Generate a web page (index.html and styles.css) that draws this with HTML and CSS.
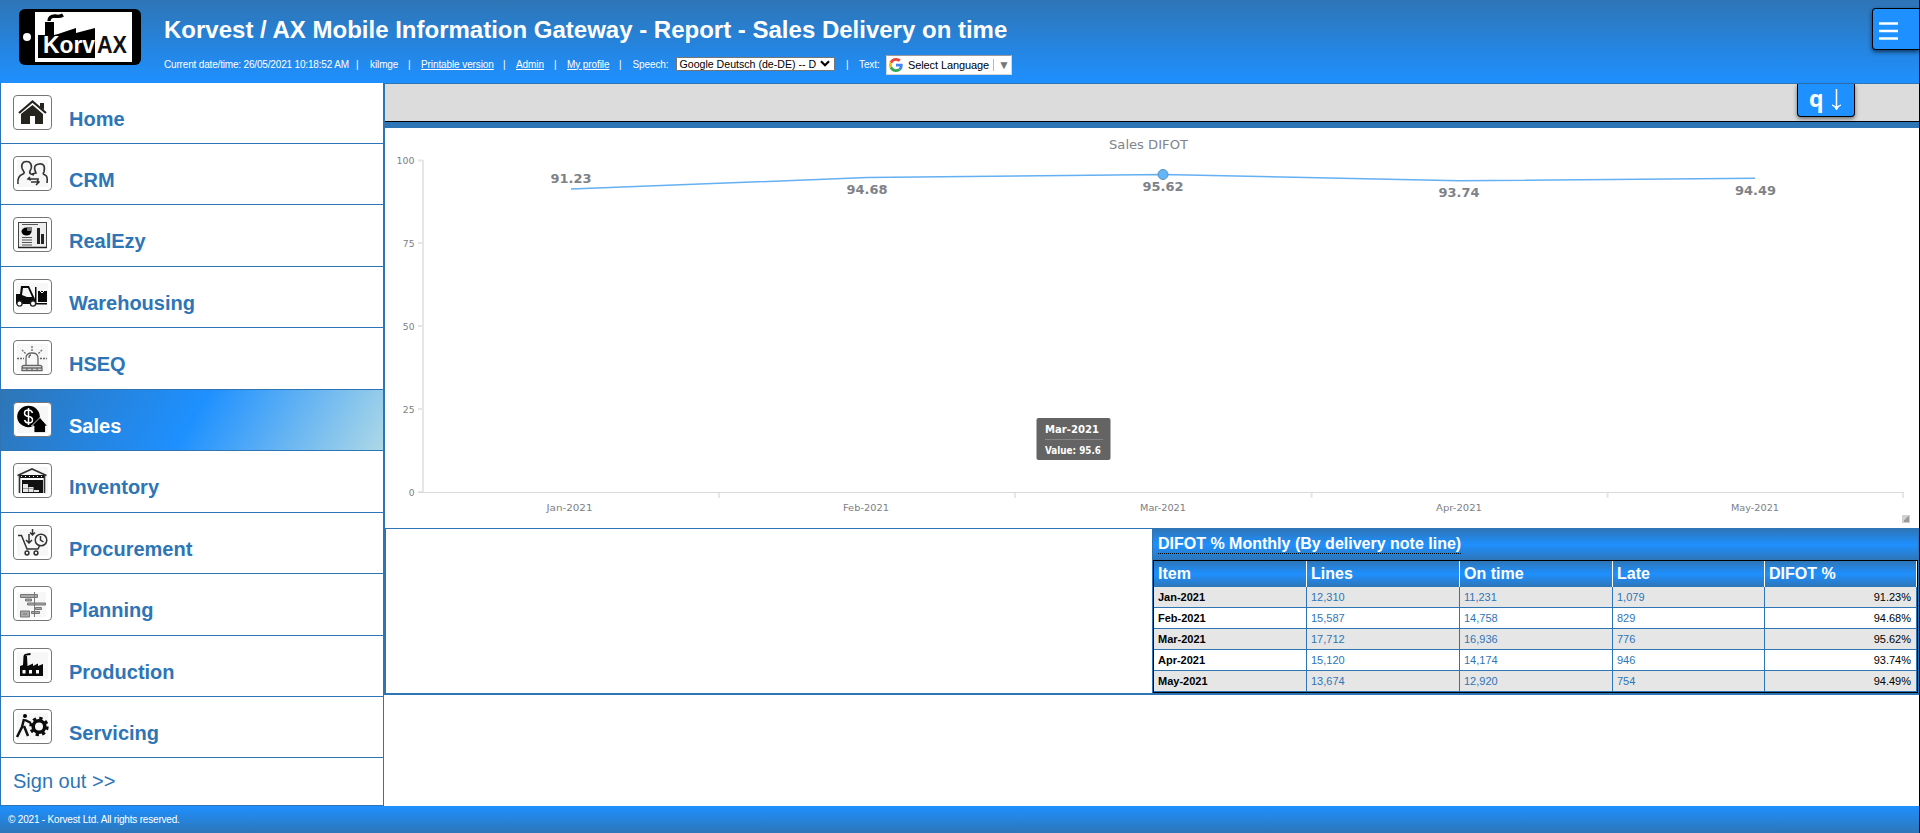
FILE: index.html
```html
<!DOCTYPE html>
<html lang="en">
<head>
<meta charset="utf-8">
<title>Korvest / AX Mobile Information Gateway</title>
<link rel="stylesheet" href="styles.css">
</head>
<body>
<div class="page">
<header class="header">
  <svg class="logo" width="122" height="56" viewBox="0 0 122 56">
    <rect width="122" height="56" rx="6" fill="#000"/>
    <rect x="16" y="3" width="97" height="50" fill="#fff"/>
    <ellipse cx="8" cy="28" rx="4" ry="4" fill="#fff"/>
    <path d="M19 49V26h7V13h9v13l4-1 18-6v5l19-5v30z" fill="#000"/>
    <path d="M30 12q0-5 6-5 5 1 8-1" fill="none" stroke="#000" stroke-width="3.400"/>
    <text class="logo-korv" x="24" y="44" textLength="52" lengthAdjust="spacingAndGlyphs">Korv</text>
    <text class="logo-ax" x="78" y="44" textLength="30" lengthAdjust="spacingAndGlyphs">AX</text>
  </svg>
  <div class="heading">
    <h1>Korvest / AX Mobile Information Gateway - Report - Sales Delivery on time</h1>
    <div class="meta">
      <span class="stamp">Current date/time: 26/05/2021 10:18:52 AM</span><i>|</i>
      <span>kilmge</span><i>|</i>
      <a>Printable version</a><i>|</i>
      <a>Admin</a><i>|</i>
      <a>My profile</a><i>|</i>
      <span>Speech:</span>
      <span class="select"><b>Google Deutsch (de-DE) -- D</b><svg width="10" height="7" viewBox="0 0 10 7"><path d="M1 1.200 5 5.200 9 1.200" fill="none" stroke="#000" stroke-width="2.200"/></svg></span><i>|</i>
      <span>Text:</span>
      <span class="language"><svg width="14" height="14" viewBox="0 0 48 48"><path fill="#EA4335" d="M24 9.500c3.540 0 6.710 1.220 9.210 3.600l6.850-6.850C35.900 2.380 30.470 0 24 0 14.620 0 6.510 5.380 2.560 13.220l7.980 6.190C12.430 13.720 17.740 9.500 24 9.500z"/><path fill="#4285F4" d="M46.980 24.550c0-1.570-.15-3.090-.38-4.550H24v9.020h12.940c-.58 2.960-2.260 5.480-4.780 7.180l7.730 6c4.510-4.180 7.090-10.360 7.090-17.650z"/><path fill="#FBBC05" d="M10.530 28.590A14.500 14.500 0 0 1 9.770 24c0-1.600.27-3.140.76-4.590l-7.980-6.190A24 24 0 0 0 0 24c0 3.880.92 7.540 2.560 10.780z"/><path fill="#34A853" d="M24 48c6.480 0 11.930-2.130 15.890-5.810l-7.730-6c-2.150 1.450-4.920 2.300-8.160 2.300-6.260 0-11.570-4.220-13.470-9.910l-7.980 6.190C6.510 42.620 14.620 48 24 48z"/></svg><b>Select Language</b><em>▼</em></span>
    </div>
  </div>
  <div class="burger"><svg width="19" height="18" viewBox="0 0 19 18"><path d="M0 1.500h19M0 9h19M0 16.500h19" stroke="#fff" stroke-width="2.400"/></svg></div>
</header>
<div class="body">
<nav class="nav">
  <a class="item"><svg class="icon" viewBox="1 1 37 33"><path fill="none" stroke="#26241f" stroke-width="2.200" d="M6 18 19.500 6.500 33 18"/><path fill="#26241f" d="M27 8h4v7l-4-3zM8 19 19.500 10 30 19v10h-8v-8h-5v8H8z"/></svg><span>Home</span></a>
  <a class="item"><svg class="icon" viewBox="1 1 37 33"><rect class="tint" x="4" y="4" width="31" height="27"/><g fill="none" stroke="#333" stroke-width="1.600"><path d="M5 28q-1-8 5-10q2-1 .5-3C7 10 9 5.500 13.500 5.500S20 10 17 15q-1 2 1 3l3 1M19 18l4-1q-4-8 3-9t5 8q-2 2 1 3t2 8M15 23h11M18 26h8M17 21l-2 2 3 1M24 24l2 2-3 3"/></g></svg><span>CRM</span></a>
  <a class="item"><svg class="icon" viewBox="1 1 37 33"><rect x="5.500" y="5.500" width="28" height="25" fill="#eee" stroke="#444"/><path d="M9 7.500h16M9 20.500h10M9 23h10M9 25.500h10M9 28h10" stroke="#555"/><path d="M24 11h3v16h-3zM28 17h3v10h-3z" fill="#222"/><ellipse cx="13.500" cy="14.500" rx="5" ry="4"/><path d="M14 14v-4h5v4z" fill="#777"/><path d="M5 30.500h29" stroke="#222" stroke-width="1.500"/></svg><span>RealEzy</span></a>
  <a class="item"><svg class="icon" viewBox="1 1 37 33"><rect class="tint" x="3" y="4" width="32" height="27"/><path fill="#0a0a0a" fill-rule="evenodd" d="M3 15h4l1-8h8l6 13v5H3zM10 9l-1 7 5 2h5l-4-9zM25 12h9v11h-9zM22 8h1.500v16H34v1.500H22z"/><path d="m27 12 2 2 2-2" stroke="#fff"/><g fill="#fff" stroke="#222" stroke-width="1.300"><circle cx="6.500" cy="24.500" r="2.600"/><circle cx="20" cy="24.500" r="2.600"/></g></svg><span>Warehousing</span></a>
  <a class="item"><svg class="icon" viewBox="1 1 37 33"><rect class="tint" x="4" y="4" width="31" height="27"/><g fill="none" stroke="#666" stroke-width="1.300"><path d="M13 25v-7q0-5 6-5t6 5v7M16 18q0-3 2-3M9 30.500v-3q0-2 2-2h16q2 0 2 2v3zM9 28h20M14 28v2M19 28v2M24 28v2"/><path stroke-dasharray="2 1" d="M4 18.500h7M27 18.500h7M9 10l4 4M29 10l-4 4M19 6v6"/></g></svg><span>HSEQ</span></a>
  <a class="item active"><svg class="icon" viewBox="1 1 37 33"><rect class="tint" x="4" y="4" width="31" height="27"/><ellipse cx="15.500" cy="14.500" rx="11.300" ry="10.700"/><path d="m18.500 24 8.500-8.500 7.500 8.500h-2v6.500H21V24z" stroke="#fff" stroke-width=".8"/><path d="M19.500 11q-1-3-4-3-4 0-4 3t4 3.500 4 3.500-4 3q-3 0-4-3M15.500 6v17" fill="none" stroke="#fff" stroke-width="1.500"/></svg><span>Sales</span></a>
  <a class="item"><svg class="icon" viewBox="1 1 37 33"><rect class="tint" x="4" y="4" width="31" height="27"/><path d="M4.500 12.500 19 6l14.500 6.500M6.500 12v18M31.500 12v18" fill="none" stroke="#333" stroke-width="1.600"/><path d="M7 12h24v3H7zM9 17h21v13H9z" fill="#111"/><path d="M8 13.500h23" stroke="#fff" stroke-dasharray="1 3"/><path d="M10 21h5v8h-5zM15.500 24h5v5h-5zM21 27h5v2h-5z" fill="#e6e6e6"/><path d="M10 25.500h10" stroke="#666" stroke-width=".6"/></svg><span>Inventory</span></a>
  <a class="item"><svg class="icon" viewBox="1 1 37 33"><rect class="tint" x="4" y="4" width="31" height="27"/><g fill="none" stroke="#333" stroke-width="1.500"><path d="M5 10.500h3.500L14 24h11l1.500-3M16 9v9M13 15l3 3 3-3M19.500 4v6M17 7.500l2.500 2.500L22 7.500"/><circle cx="28" cy="15" r="5.800"/><path d="M27.500 11v4l3 2"/><circle cx="14" cy="28" r="1.900"/><circle cx="23" cy="28" r="1.900"/></g></svg><span>Procurement</span></a>
  <a class="item"><svg class="icon" viewBox="1 1 37 33"><rect class="tint" x="4" y="6" width="29" height="25"/><g fill="#aaa" stroke="#777"><path d="M7.500 8.500h17v3h-17zM12.500 13h6v2h-6zM14.500 17h18v2h-18zM22.500 21.500h6v2h-6zM18.500 25.500h8v2h-8zM7.500 25h9v6h-9z"/><path d="M21.500 6v25M10 28h4"/></g></svg><span>Planning</span></a>
  <a class="item"><svg class="icon" viewBox="1 1 37 33"><rect class="tint" x="4" y="4" width="31" height="27"/><path d="M7 28V18l3-1 .5-9h3.500l.5 10 5.500-2.500V18l5-2.500V18l5-2v12z" fill="#0a0a0a"/><path d="M11.500 8q0-1.500 6-2" fill="none" stroke="#000" stroke-width="1.800"/><path d="M9.500 22h3v3.500h-3zM16 22h3v3.500h-3zM23 22h3v3.500h-3z" fill="#fff"/></svg><span>Production</span></a>
  <a class="item"><svg class="icon" viewBox="1 1 37 33"><rect class="tint" x="4" y="4" width="31" height="27"/><circle cx="12" cy="7" r="2"/><path d="M11 10 9 18l-5 10M11 17l4 10M12 11l6 3" fill="none" stroke="#111" stroke-width="2.500"/><circle cx="26" cy="17.500" r="5.800" fill="none" stroke="#0a0a0a" stroke-width="3.600"/><circle cx="26" cy="17.500" r="8.300" fill="none" stroke="#0a0a0a" stroke-width="2.800" stroke-dasharray="3.300 3.220"/></svg><span>Servicing</span></a>
  <a class="signout">Sign out &gt;&gt;</a>
</nav>
<main class="main">
  <div class="toolbar"><div class="quick"><b>q</b><svg width="11" height="22" viewBox="0 0 11 22"><path d="M5.500 0v18" stroke="#fff" stroke-width="1.500"/><path d="M1 16q3 1 4.500 5Q7 17 10 16l-4.500 2z" fill="#fff" stroke="#fff"/></svg></div></div>
  <svg class="chart" width="1534" height="400" viewBox="385 128 1534 400">
    <path d="M423 160v332M418 160.500h5M418 243h5M418 326h5M418 409h5M418 492h5M719 492v6M1015 492v6M1311.500 492v6M1607.500 492v6M1903 492v6" stroke="#e6e6e6" stroke-width="2"/>
    <path d="M418 492.500h1485.500" stroke="#d9d9d9"/>
    <polyline points="571,189 867,177.600 1163,174.500 1459,180.700 1755,178.300" fill="none" stroke="#64b0f2" stroke-width="1.500"/>
    <circle cx="1163" cy="174.500" r="5" fill="#64b5f6" stroke="#5590c4"/>
    <g class="axis" text-anchor="end"><text x="414.500" y="164" textLength="18" lengthAdjust="spacingAndGlyphs">100</text><text x="414.500" y="247">75</text><text x="414.500" y="330">50</text><text x="414.500" y="413">25</text><text x="414.500" y="496">0</text></g>
    <g class="axis"><text x="546.500" y="511" textLength="46" lengthAdjust="spacingAndGlyphs">Jan-2021</text><text x="843" y="511" textLength="46" lengthAdjust="spacingAndGlyphs">Feb-2021</text><text x="1140" y="511" textLength="46" lengthAdjust="spacingAndGlyphs">Mar-2021</text><text x="1436" y="511" textLength="46" lengthAdjust="spacingAndGlyphs">Apr-2021</text><text x="1731" y="511" textLength="48" lengthAdjust="spacingAndGlyphs">May-2021</text></g>
    <text class="chart-title" x="1109" y="149" textLength="79" lengthAdjust="spacingAndGlyphs">Sales DIFOT</text>
    <g class="value"><text x="550.500" y="183" textLength="41" lengthAdjust="spacingAndGlyphs">91.23</text><text x="846.500" y="194" textLength="41" lengthAdjust="spacingAndGlyphs">94.68</text><text x="1142.500" y="191" textLength="41" lengthAdjust="spacingAndGlyphs">95.62</text><text x="1438.500" y="197" textLength="41" lengthAdjust="spacingAndGlyphs">93.74</text><text x="1735" y="195" textLength="41" lengthAdjust="spacingAndGlyphs">94.49</text></g>
    <rect x="1036.500" y="418" width="74" height="42" rx="2" fill="#646464"/>
    <path d="M1045 439.500h58" stroke="#858585"/>
    <g class="tip"><text x="1045" y="433" textLength="54" lengthAdjust="spacingAndGlyphs">Mar-2021</text><text x="1045" y="454" textLength="56" lengthAdjust="spacingAndGlyphs">Value: 95.6</text></g>
    <path d="M1902 515h8v8h-8z" fill="#d0d0d0"/><path d="M1904 522v-2l2-1v-1l3-2v6z" fill="#9a9a9a"/>
  </svg>
  <section class="detail">
    <div class="blank"></div>
    <div class="report">
      <div class="report-title"><span>DIFOT % Monthly (By delivery note line)</span></div>
      <table>
        <colgroup><col class="wide"><col class="wide"><col class="wide"><col><col></colgroup>
        <thead><tr><th>Item</th><th>Lines</th><th>On time</th><th>Late</th><th>DIFOT %</th></tr></thead>
        <tbody>
          <tr><th>Jan-2021</th><td>12,310</td><td>11,231</td><td>1,079</td><td>91.23%</td></tr>
          <tr><th>Feb-2021</th><td>15,587</td><td>14,758</td><td>829</td><td>94.68%</td></tr>
          <tr><th>Mar-2021</th><td>17,712</td><td>16,936</td><td>776</td><td>95.62%</td></tr>
          <tr><th>Apr-2021</th><td>15,120</td><td>14,174</td><td>946</td><td>93.74%</td></tr>
          <tr><th>May-2021</th><td>13,674</td><td>12,920</td><td>754</td><td>94.49%</td></tr>
        </tbody>
      </table>
    </div>
  </section>
</main>
</div>
<footer class="footer">© 2021 - Korvest Ltd. All rights reserved.</footer>
</div>
</body>
</html>
```
FILE: styles.css
```css
* { box-sizing: border-box; }
body { margin: 0; background: #fff; font-family: "Liberation Sans", Arial, sans-serif; overflow: hidden; }
.page { width: 1920px; height: 833px; display: flex; flex-direction: column; border-right: 1px solid #000; }

.header { height: 83px; flex: none; display: flex; align-items: flex-start; background: linear-gradient(#2e75b6, #1e90ff); color: #fff; }
.logo { margin: 9px 0 0 19px; flex: none; }
.logo-korv, .logo-ax { font-size: 24px; font-weight: bold; fill: #fff; }
.logo-ax { fill: #111; }
.heading { margin-left: 23px; flex: 1; }
h1 { margin: 16px 0 0; font-size: 24px; line-height: 28px; white-space: nowrap; }
.meta { display: grid; grid-template-columns: 192px 14px 38px 13px 82px 13px 38px 13px 52px 13.5px 43px 170.500px 13px 27px 126px; align-items: center; height: 20px; margin-top: 10px; font-size: 10px; white-space: nowrap; line-height: 12px; letter-spacing: -.1px; }
.meta i { font-style: normal; }
.meta a { text-decoration: underline; }
.stamp { letter-spacing: -.17px; }
.select { width: 159px; height: 14px; margin-top: -2px; display: flex; align-items: center; justify-content: space-between; background: #fff; border: 1px solid #767676; border-radius: 1px; padding: 0 4px 0 3px; color: #000; letter-spacing: 0; }
.select b, .language b { font-weight: normal; }
.select b { font-size: 10.600px; }
.language { height: 20px; margin-top: 1px; display: flex; align-items: center; background: #fff; border: 1px solid #d5d5d5; border-top-color: #9b9b9b; padding-left: 2px; color: #000; font-size: 11px; letter-spacing: -.1px; }
.language svg { flex: none; }
.language b { margin-left: 5px; width: 82px; }
.language em { margin-left: 3px; border-left: 1px solid #bbb; padding-left: 4px; font-style: normal; color: #767676; font-size: 12px; }
.burger { width: 47px; height: 42px; margin-top: 8px; border: 1px solid #000; border-right: 0; border-radius: 4px 0 0 4px; background: #1e90ff; padding: 13px 0 0 6px; box-shadow: 0 2px 4px rgba(0,0,0,.6); flex: none; }
.burger svg { display: block; }

.body { height: 723px; flex: none; display: flex; align-items: flex-start; }
.nav { width: 384px; height: 723px; flex: none; border: 1px solid #2e75b6; border-top: 0; color: #2e75b6; font-size: 20px; }
.item { display: flex; height: 61px; border-bottom: 1px solid #2e75b6; padding: 12px 0 0 12px; font-weight: bold; line-height: 24px; }
.item:nth-child(3), .item:nth-child(5), .item:nth-child(7), .item:nth-child(9) { height: 62px; }
.item span { margin: 12px 0 0 17px; }
.icon { width: 39px; height: 35px; flex: none; background: #fff; border: 1px solid #777; border-radius: 4px; }
.tint { fill: #f7f7f7; }
.active { color: #fff; background: linear-gradient(120deg, #2e75b6, #1e90ff 50%, #add8e6); }
.signout { display: block; padding: 11px 0 0 12px; line-height: 24px; }

.main { flex: 1; min-width: 0; border-left: 1px solid #2e75b6; }
.toolbar { height: 45px; background: #dcdcdc; border-top: 1px solid #2e75b6; border-bottom: 6px solid #2e75b6; box-shadow: inset 0 -1px #000; padding-left: 1412px; }
.quick { width: 58px; height: 33px; display: flex; background: #1e90ff; border: 1px solid #000; border-top: 0; border-radius: 0 0 4px 4px; box-shadow: 0 2px 4px rgba(0,0,0,.5); color: #fff; padding: 5px 0 0 11px; }
.quick b { font: bold 23px/19px "Open Sans", sans-serif; width: 22px; }
.chart { display: block; font-family: "DejaVu Sans", Verdana, sans-serif; }
.axis { font-size: 9.200px; fill: #7c8086; }
.chart-title { font-size: 12.500px; fill: #80848a; }
.value { font-size: 12px; font-weight: bold; fill: #7e8287; }
.tip { font-size: 10px; font-weight: bold; fill: #fff; }

.detail { height: 167px; display: flex; border: solid #2e75b6; border-width: 1px 0 2px 1px; }
.blank { width: 766px; flex: none; }
.report { flex: 1; border: solid #2e75b6; border-width: 0 1px 0 1px; }
.report-title { height: 31px; padding: 5px 0 0 5px; background: linear-gradient(#2e75b6, #1e90ff 50%, #2e75b6); color: #fff; font-size: 16px; font-weight: bold; line-height: 19px; }
.report-title span { display: inline-block; border-bottom: 1px dotted #000; height: 20px; }
table { width: 100%; height: 133px; table-layout: fixed; border-collapse: separate; border-spacing: 0; border: 1px solid #000; }
col { width: 152px; }
col.wide { width: 153px; }
th, td { text-align: left; padding: 0 5px 0 4px; font-size: 11px; border: solid #2e75b6; border-width: 0 1px 1px 0; height: 21px; line-height: 14px; }
td { color: #2e75b6; }
td:last-child { text-align: right; color: #000; }
thead th { height: 26px; border: 0; border-right: 1px solid #fff; color: #fff; font-size: 16px; background: linear-gradient(#2e75b6, #1e90ff 50%, #2e75b6); }
tbody tr:nth-child(odd) { background: #e6e6e6; }

.footer { flex: 1; background: linear-gradient(#1e90ff, #2e75b6); color: #fff; padding: 8px; font-size: 10px; line-height: 12px; letter-spacing: -.19px; }
```
